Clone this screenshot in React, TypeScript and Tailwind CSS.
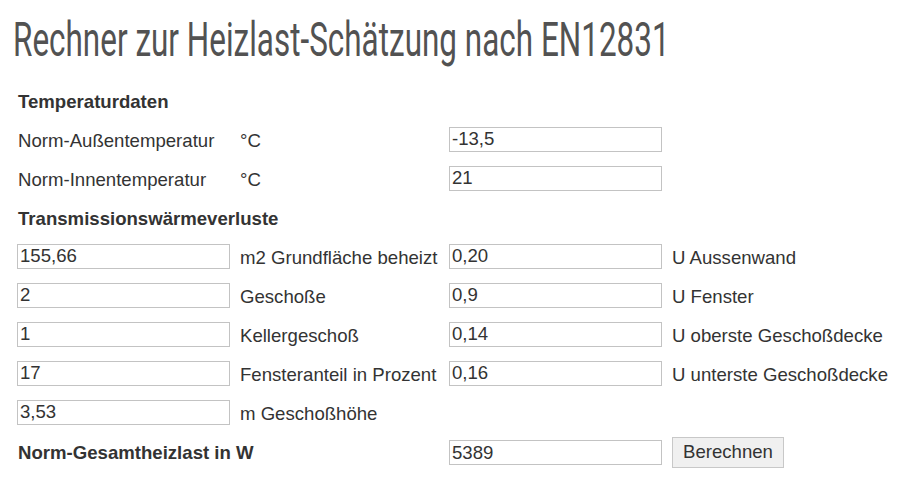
import React from "react";

const field =
  "h-[25px] w-[213px] border border-[#c3c3c3] bg-white px-[2px] text-[18.6px] leading-none text-[#333] outline-none";

function Num({ value, flush }: { value: string; flush?: boolean }) {
  return <input className={flush ? field : `${field} mb-[3px]`} defaultValue={value} />;
}

function Label({ children, bold }: { children: React.ReactNode; bold?: boolean }) {
  return (
    <span className={bold ? "font-bold whitespace-nowrap" : "whitespace-nowrap"}>
      {children}
    </span>
  );
}

const transRows = [
  ["155,66", "m2 Grundfläche beheizt", "0,20", "U Aussenwand"],
  ["2", "Geschoße", "0,9", "U Fenster"],
  ["1", "Kellergeschoß", "0,14", "U oberste Geschoßdecke"],
  ["17", "Fensteranteil in Prozent", "0,16", "U unterste Geschoßdecke"],
];

export default function App() {
  return (
    <div className="min-h-screen overflow-hidden bg-white">
      {/* no condensed face installed, so Roboto is squeezed horizontally */}
      <h1 className="overflow-hidden pl-[13px] pt-[12px] text-[49px] leading-[56px] font-normal text-[#525252] font-['Roboto',sans-serif] whitespace-nowrap">
        <span className="inline-block origin-left scale-x-[0.642]">
          Rechner zur Heizlast-Schätzung nach EN12831
        </span>
      </h1>

      <div className="mt-[14px] grid grid-cols-[213px_199px_213px_auto] auto-rows-[39px] items-center gap-x-[10px] pl-[17px] text-[18.6px] text-[#333] font-['Liberation_Sans',Arial,sans-serif]">
        <div className="col-span-4 pl-[1px]">
          <Label bold>Temperaturdaten</Label>
        </div>

        <div className="pl-[1px]">Norm-Außentemperatur</div>
        <div>°C</div>
        <Num value="-13,5" />
        <div />

        <div className="pl-[1px]">Norm-Innentemperatur</div>
        <div>°C</div>
        <Num value="21" />
        <div />

        <div className="col-span-4 pl-[1px]">
          <Label bold>Transmissionswärmeverluste</Label>
        </div>

        {transRows.map((r) => (
          <React.Fragment key={r[1]}>
            <Num value={r[0]} />
            <Label>{r[1]}</Label>
            <Num value={r[2]} />
            <Label>{r[3]}</Label>
          </React.Fragment>
        ))}

        <Num value="3,53" />
        <Label>m Geschoßhöhe</Label>
        <div />
        <div />

        <div className="col-span-2 h-[41px] flex items-center pl-[1px]">
          <Label bold>Norm-Gesamtheizlast in W</Label>
        </div>
        <Num value="5389" flush />
        <div>
          <button className="h-[31px] border border-[#c8c8c8] bg-[#f0f0f0] px-[10px] text-[18.6px] leading-none text-[#333]">
            Berechnen
          </button>
        </div>
      </div>
    </div>
  );
}
